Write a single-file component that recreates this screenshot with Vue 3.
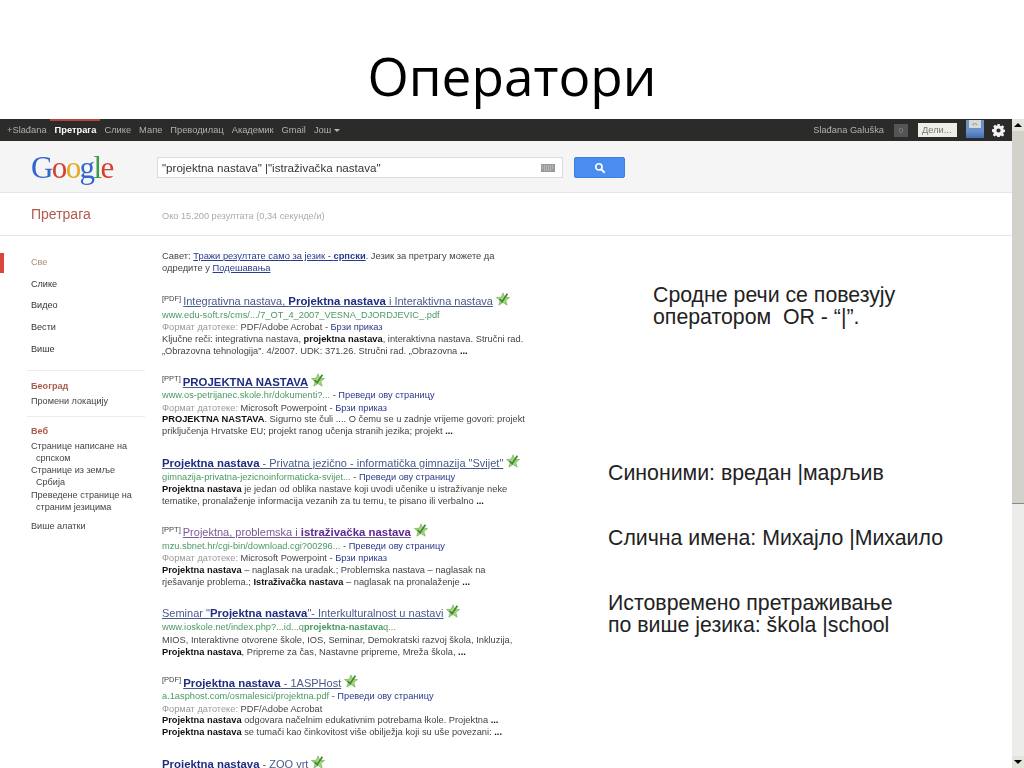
<template>
  <div class="slide">
    <h1 class="title">Оператори</h1>

    <div class="shot">
      <div class="browser">
        <!-- Црна трака -->
        <div class="topbar">
          <div class="topbar-links">
            <span>+Slađana</span>
            <span class="current">Претрага</span>
            <span v-for="link in topLinks" :key="link">{{ link }}</span>
            <span>Још <i class="caret"></i></span>
          </div>
          <div class="topbar-right">
            <span class="user">Slađana Galuška</span>
            <span class="count">0</span>
            <span class="share">Дели...</span>
            <span class="avatar"><i>⇔</i></span>
            <svg class="gear" viewBox="0 0 16 16" width="13" height="13">
              <path fill="#f2f2f2" fill-rule="evenodd" d="M6.6 0h2.8l.4 2.2 1.3.6 1.9-1.3 2 2-1.3 1.9.6 1.3 2.2.4v2.8l-2.2.4-.6 1.3 1.3 1.9-2 2-1.9-1.3-1.3.6-.4 2.2H6.6l-.4-2.2-1.3-.6-1.9 1.3-2-2 1.3-1.9-.6-1.3L0 9.4V6.6l2.2-.4.6-1.3-1.3-1.9 2-2 1.9 1.3 1.3-.6zM8 5.4a2.6 2.6 0 1 0 0 5.2 2.6 2.6 0 0 0 0-5.2z" />
            </svg>
          </div>
        </div>

        <!-- Лого и претрага -->
        <div class="searchbar">
          <div class="logo"><b class="b">G</b><b class="r">o</b><b class="y">o</b><b class="b">g</b><b class="g">l</b><b class="r">e</b></div>
          <div class="searchbox">
            <span>"projektna nastava" |"istraživačka nastava"</span>
            <svg width="14" height="8" viewBox="0 0 14 8"><rect width="14" height="8" fill="#9a9a9a" /><path d="M1 2h12M1 4h12M3 6h8" stroke="#d8d8d8" stroke-dasharray="1 1" /></svg>
          </div>
          <button class="searchbtn">
            <svg width="12" height="12" viewBox="0 0 13 13"><circle cx="5.3" cy="5.3" r="3.4" fill="none" stroke="#fff" stroke-width="1.8" /><path d="M8 8l3.6 3.6" stroke="#fff" stroke-width="2.2" /></svg>
          </button>
        </div>

        <div class="subbar">
          <span class="section">Претрага</span>
          <span class="stats">Око 15.200 резултата (0,34 секунде/и)</span>
        </div>

        <div class="content">
          <aside class="side">
            <ul class="side-types">
              <li v-for="(item, i) in sideTypes" :key="item" :class="{ active: i === 0 }">{{ item }}</li>
            </ul>
            <div class="side-block">
              <h4>Београд</h4>
              <p>Промени локацију</p>
            </div>
            <div class="side-block">
              <h4>Веб</h4>
              <p class="hang">Странице написане на српском</p>
              <p class="hang">Странице из земље Србија</p>
              <p class="hang">Преведене странице на страним језицима</p>
              <p class="more">Више алатки</p>
            </div>
          </aside>

          <main class="results">
            <p class="tip">
              Савет: <a>Тражи резултате само за језик - <b>српски</b> </a>. Језик за претрагу можете да<br />
              одредите у <a>Подешавања</a>
            </p>

            <article v-for="r in results" :key="r.id" class="result" :class="{ 'has-meta': r.format }">
              <div class="r-title">
                <sup v-if="r.tag">[{{ r.tag }}]</sup>
                <a :class="{ visited: r.visited }" v-html="r.title"></a>
                <svg class="star" viewBox="0 0 16 16" width="14" height="14">
                  <path fill="#a6d67e" stroke="#6aa84f" stroke-width=".7" d="M8 1l2 5 5.500.3-4.300 3.400 1.600 5.300L8 12l-4.800 3 1.600-5.300L.500 6.300 6 6z" />
                  <path fill="none" stroke="#3d8b2f" stroke-width="2" d="M4 8l3 3 6-9" />
                </svg>
              </div>
              <div v-if="r.url" class="r-url"><span class="green" v-html="r.url"></span><template v-if="r.translate"> - <a class="plain">Преведи ову страницу</a></template></div>
              <div v-if="r.format" class="r-meta"><span class="grey">Формат датотеке:</span> {{ r.format }}<template v-if="r.quick"> - <a class="plain">Брзи приказ</a></template></div>
              <p v-if="r.text" class="r-text" v-html="r.text"></p>
            </article>
          </main>
        </div>
      </div>

      <div class="scrollbar">
        <span class="sb-btn up"></span>
        <span class="sb-thumb"></span>
        <span class="sb-track"></span>
        <span class="sb-btn down"></span>
      </div>

      <!-- Напомене преко снимка екрана -->
      <p class="note n1">Сродне речи се повезују<br />оператором&nbsp; OR - “|”.</p>
      <p class="note n2">Синоними: вредан |марљив</p>
      <p class="note n3">Слична имена: Михајло |Михаило</p>
      <p class="note n4">Истовремено претраживање<br />по више језика: škola |school</p>
    </div>
  </div>
</template>

<script setup>
const topLinks = ['Слике', 'Мапе', 'Преводилац', 'Академик', 'Gmail']
const sideTypes = ['Све', 'Слике', 'Видео', 'Вести', 'Више']

const results = [
  {
    id: 1,
    tag: 'PDF',
    title: 'Integrativna nastava, <b>Projektna nastava</b> i Interaktivna nastava',
    url: 'www.edu-soft.rs/cms/.../7_OT_4_2007_VESNA_DJORDJEVIC_.pdf',
    format: 'PDF/Adobe Acrobat',
    quick: true,
    text: 'Ključne reči: integrativna nastava, <b>projektna nastava</b>, interaktivna nastava. Stručni rad.<br>„Obrazovna tehnologija". 4/2007. UDK: 371.26. Stručni rad. „Obrazovna <b>...</b>'
  },
  {
    id: 2,
    tag: 'PPT',
    title: '<b>PROJEKTNA NASTAVA</b>',
    url: 'www.os-petrijanec.skole.hr/dokumenti?...',
    translate: true,
    format: 'Microsoft Powerpoint',
    quick: true,
    text: '<b>PROJEKTNA NASTAVA</b>. Sigurno ste čuli .... O čemu se u zadnje vrijeme govori: projekt<br>priključenja Hrvatske EU; projekt ranog učenja stranih jezika; projekt <b>...</b>'
  },
  {
    id: 3,
    title: '<b>Projektna nastava</b> - Privatna jezično - informatička gimnazija "Svijet"',
    url: 'gimnazija-privatna-jezicnoinformaticka-svijet...',
    translate: true,
    text: '<b>Projektna nastava</b> je jedan od oblika nastave koji uvodi učenike u istraživanje neke<br>tematike, pronalaženje informacija vezanih za tu temu, te pisano ili verbalno <b>...</b>'
  },
  {
    id: 4,
    tag: 'PPT',
    visited: true,
    title: 'Projektna, problemska i <b>istraživačka nastava</b>',
    url: 'mzu.sbnet.hr/cgi-bin/download.cgi?00296...',
    translate: true,
    format: 'Microsoft Powerpoint',
    quick: true,
    text: '<b>Projektna nastava</b> – naglasak na uradak.; Problemska nastava – naglasak na<br>rješavanje problema.; <b>Istraživačka nastava</b> – naglasak na pronalaženje <b>...</b>'
  },
  {
    id: 5,
    title: 'Seminar "<b>Projektna nastava</b>"- Interkulturalnost u nastavi',
    url: 'www.ioskole.net/index.php?...id...q<b>projektna-nastava</b>q...',
    text: 'MIOS, Interaktivne otvorene škole, IOS, Seminar, Demokratski razvoj škola, Inkluzija,<br><b>Projektna nastava</b>, Pripreme za čas, Nastavne pripreme, Mreža škola, <b>...</b>'
  },
  {
    id: 6,
    tag: 'PDF',
    title: '<b>Projektna nastava</b> - 1ASPHost',
    url: 'a.1asphost.com/osmalesici/projektna.pdf',
    translate: true,
    format: 'PDF/Adobe Acrobat',
    text: '<b>Projektna nastava</b> odgovara načelnim edukativnim potrebama łkole. Projektna <b>...</b><br><b>Projektna nastava</b> se tumači kao činkovitost više obilježja koji su uše povezani: <b>...</b>'
  },
  {
    id: 7,
    title: '<b>Projektna nastava</b> - ZOO vrt'
  }
]
</script>

<style>
html,
body {
  margin: 0;
  height: 100%;
  overflow: hidden;
  background: #fff;
}
</style>

<style scoped>
.slide {
  width: 1024px;
  height: 768px;
  overflow: hidden;
  display: flex;
  flex-direction: column;
  font-family: "Liberation Sans", Arial, sans-serif;
}

.title {
  height: 119px;
  margin: 0;
  box-sizing: border-box;
  padding-top: 42px;
  text-align: center;
  font-family: "Open Sans", sans-serif;
  font-size: 53.100px;
  line-height: 68px;
  font-weight: 400;
  color: #000;
}

.shot {
  position: relative;
  flex: 1;
  display: flex;
  min-height: 0;
}

.browser {
  width: 1012px;
  overflow: hidden;
  font-size: 9.100px;
  color: #444;
  filter: blur(0.3px);
}

/* барови */
.topbar {
  height: 22px;
  background: #2b2c29;
  box-sizing: border-box;
  display: flex;
  justify-content: space-between;
  align-items: center;
  color: #b0b0ac;
  font-size: 9.300px;
}

.topbar-links {
  display: flex;
  gap: 8px;
  padding-left: 7px;
}

.current {
  color: #fff;
  font-weight: 700;
  position: relative;
}

.current::before {
  content: "";
  position: absolute;
  left: -5px;
  right: -4px;
  top: -6px;
  height: 2px;
  background: #b5453c;
}

.caret {
  display: inline-block;
  border: 3px solid transparent;
  border-top-color: #b8b8b8;
  border-bottom: 0;
  vertical-align: middle;
}

.topbar-right {
  display: flex;
  align-items: center;
  padding-right: 7px;
}

.user {
  margin-right: 10px;
}

.count {
  width: 14px;
  height: 13px;
  background: #555;
  color: #888;
  font-size: 8px;
  line-height: 13px;
  text-align: center;
  margin-right: 10px;
}

.share {
  width: 39px;
  height: 14px;
  line-height: 14px;
  background: #eeeee6;
  color: #777;
  padding-left: 4px;
  box-sizing: border-box;
  margin-right: 9px;
}

.avatar {
  width: 18px;
  height: 18px;
  background: linear-gradient(#6b8fc9 60%, #3f6fb0);
  position: relative;
  margin: -2px 8px 0 0;
}

.avatar i {
  position: absolute;
  top: 0;
  left: 3px;
  width: 12px;
  height: 8px;
  background: #d8d8d8;
  color: #333;
  font-size: 7px;
  line-height: 8px;
  font-style: normal;
  text-align: center;
}

.searchbar {
  height: 52px;
  box-sizing: border-box;
  padding-top: 2px;
  background: #f5f5f5;
  border-bottom: 1px solid #e5e5e5;
  display: flex;
  align-items: center;
}

.logo {
  width: 126px;
  padding-left: 31px;
  font-family: "Liberation Serif", serif;
  font-size: 31px;
  letter-spacing: -1.600px;
  line-height: 40px;
}

.logo b {
  font-weight: 400;
}

.logo .b { color: #3366cc; }
.logo .r { color: #d2402f; }
.logo .y { color: #e3a920; }
.logo .g { color: #3c9a48; }

.searchbox {
  width: 406px;
  height: 21px;
  box-sizing: border-box;
  background: #fff;
  border: 1px solid #dcdcdc;
  padding: 0 7px 0 4px;
  display: flex;
  justify-content: space-between;
  align-items: center;
  font-size: 11.600px;
  color: #333;
}

.searchbtn {
  width: 51px;
  height: 21px;
  margin-left: 11px;
  padding: 0;
  background: #4a8cf0;
  border: 1px solid #3f7fe0;
  border-radius: 2px;
  display: flex;
  align-items: center;
  justify-content: center;
}

.subbar {
  height: 43px;
  box-sizing: border-box;
  border-bottom: 1px solid #e5e5e5;
  background: #fff;
  display: flex;
  align-items: center;
}

.section {
  width: 131px;
  padding-left: 31px;
  color: #b25a4c;
  font-size: 14px;
}

.stats {
  color: #aaa;
  font-size: 9.200px;
  padding-top: 3px;
}

/* садржај */
.content {
  display: flex;
  background: #fff;
}

.side {
  width: 162px;
  flex: none;
  box-sizing: border-box;
  padding: 15px 17px 0 0;
}

.side-types {
  list-style: none;
  margin: 0;
  padding: 0 0 11px 31px;
}

.side-types li {
  height: 21.700px;
  line-height: 22px;
  color: #333;
}

.side-types .active {
  color: #b5896f;
  position: relative;
}

.side-types .active::before {
  content: "";
  position: absolute;
  left: -31px;
  top: 2px;
  width: 4px;
  height: 20px;
  background: #d9473a;
}

.side-block {
  margin-left: 27px;
  padding: 9px 0 9px 4px;
  border-top: 1px solid #ebebeb;
}

.side-block + .side-block {
  padding-top: 8px;
}

.side-block h4 {
  margin: 0;
  color: #ab5c4b;
  font-size: 9.100px;
  line-height: 13px;
  font-weight: 700;
}

.side-block p {
  margin: 0;
  line-height: 12px;
  padding-top: 2px;
}

.side-block .hang {
  padding: 0 0 0.500px 5px;
  text-indent: -5px;
}

.side-block h4 + .hang {
  margin-top: 1.500px;
}

.side-block .more {
  padding-top: 6.500px;
}

.results {
  flex: 1;
  padding-top: 14px;
}

.tip {
  margin: 0;
  line-height: 12px;
  font-size: 9.350px;
}

.results a {
  color: #2a3a8c;
  text-decoration: underline;
}

.results .plain {
  color: #2a3a8c;
  text-decoration: none;
}

.result {
  margin-top: 18.500px;
}

.tip + .result {
  margin-top: 20.500px;
}

.r-title {
  display: flex;
  align-items: center;
  height: 15px;
  font-size: 11px;
  line-height: 15px;
  white-space: nowrap;
}

.has-meta .r-title {
  height: 14px;
}

.r-title sup {
  font-size: 7.500px;
  line-height: 8px;
  align-self: flex-start;
  margin: 0 2px 0 0;
}

.r-title a {
  color: #4a5a8a;
}

.r-title a :deep(b) {
  color: #1f2d80;
  font-size: 11.400px;
}

.r-title a.visited {
  color: #7a5a96;
}

.r-title a.visited :deep(b) {
  color: #5a2a92;
}

.star {
  margin: -5px 0 0 3px;
  flex: none;
}

.r-url,
.r-meta {
  height: 12.500px;
  line-height: 12.500px;
  font-size: 9.250px;
  white-space: nowrap;
}

.green {
  color: #4a9a62;
}

.grey {
  color: #999;
}

.r-text {
  margin: 0;
  line-height: 12px;
  font-size: 9.300px;
  white-space: nowrap;
  color: #444;
}

.has-meta .r-text {
  margin-top: -1px;
}

.r-text :deep(b) {
  color: #111;
}

/* скролбар */
.scrollbar {
  width: 12px;
  display: flex;
  flex-direction: column;
  background: #e8e8e0;
}

.sb-btn {
  height: 12px;
  flex: none;
  background: #e4e4dc;
  position: relative;
}

.sb-btn::after {
  content: "";
  position: absolute;
  left: 2px;
  border: 4px solid transparent;
}

.up::after {
  top: 0;
  border-bottom-color: #000;
}

.down::after {
  bottom: 0;
  border-top-color: #000;
}

.sb-thumb {
  height: 373px;
  flex: none;
  background: #d2d2ca;
  border-bottom: 1px solid #888;
  box-sizing: border-box;
}

.sb-track {
  flex: 1;
  background: #ececea;
}

/* напомене */
.note {
  position: absolute;
  margin: 0;
  font-size: 21.300px;
  line-height: 22px;
  color: #222;
  white-space: nowrap;
}

.n1 { left: 653px; top: 165px; }
.n2 { left: 608px; top: 343px; }
.n3 { left: 608px; top: 408px; }
.n4 { left: 608px; top: 473px; }
</style>
